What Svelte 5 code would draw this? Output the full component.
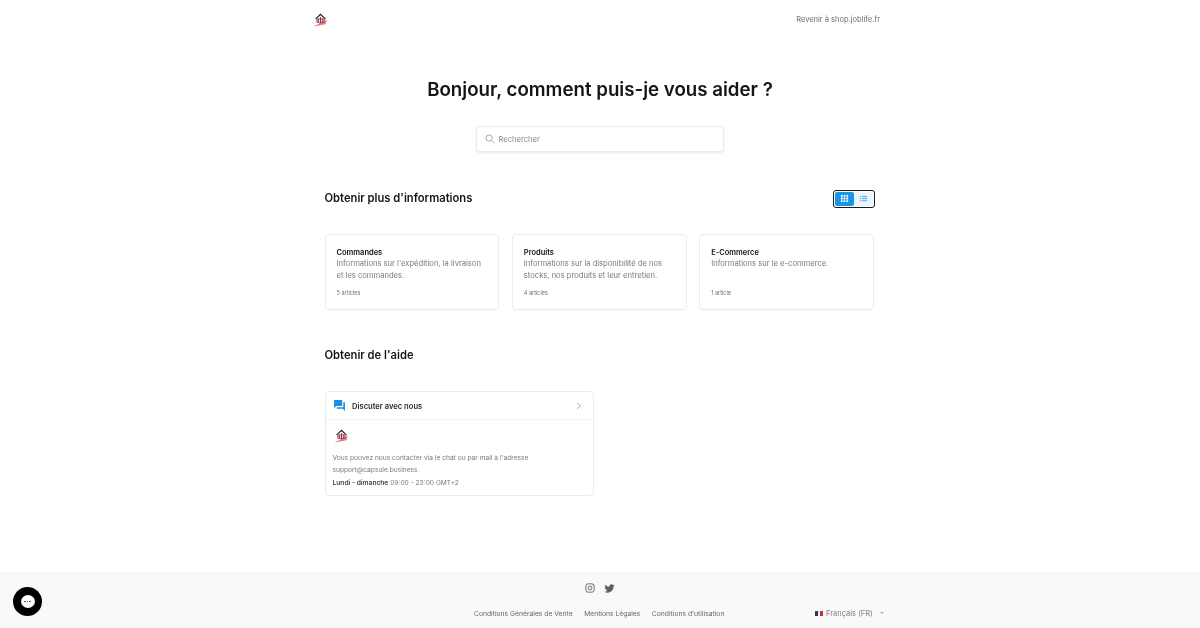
<script>
  const cards = [
    { title: 'Commandes', text: "Informations sur l'expédition, la livraison et les commandes.", count: '5 articles' },
    { title: 'Produits', text: 'Informations sur la disponibilité de nos stocks, nos produits et leur entretien.', count: '4 articles' },
    { title: 'E-Commerce', text: 'Informations sur le e-commerce.', count: '1 article' }
  ];
</script>

{#snippet logo()}
  <svg class="logo" viewBox="0 0 16 16" width="15" height="15" aria-hidden="true">
    <path d="M0.500 15.500 L14.500 8 L13.500 13 Z" fill="#ea7c8a"/>
    <path d="M2 7.500 L8 1.500 L14 7.500 L12.500 7.500 L8 3.500 L3.500 7.500 Z" fill="#222"/>
    <path d="M4 7.500 H12 V11 H4 Z" fill="#fff" stroke="#333" stroke-width="0.600"/>
    <path d="M5.500 7 V11.500 M8 5.500 V12 M10.500 7 V11.500" stroke="#b01c2e" stroke-width="1.300"/>
  </svg>
{/snippet}

<div class="page">
  <header class="top">
    {@render logo()}
    <span class="back">Revenir à shop.joblife.fr</span>
  </header>

  <main class="main">
    <h1>Bonjour, comment puis-je vous aider ?</h1>
    <div class="search">
      <svg viewBox="0 0 16 16" width="10" height="10" fill="none" stroke="#a5a5a5" stroke-width="1.500" aria-hidden="true">
        <circle cx="6.500" cy="6.500" r="5"/><path d="M10.500 10.500 L15 15"/>
      </svg>
      <span>Rechercher</span>
    </div>

    <section class="content">
      <div class="head">
        <h2>Obtenir plus d'informations</h2>
        <div class="toggle">
          <span class="opt active">
            <svg viewBox="0 0 10 10" width="9" height="9" fill="#fff" aria-hidden="true">
              <path d="M1 1h2v2H1zM4 1h2v2H4zM7 1h2v2H7zM1 4h2v2H1zM4 4h2v2H4zM7 4h2v2H7zM1 7h2v2H1zM4 7h2v2H4zM7 7h2v2H7z"/>
            </svg>
          </span>
          <span class="opt">
            <svg viewBox="0 0 10 10" width="9" height="9" fill="#6db9ec" aria-hidden="true">
              <path d="M1 2h1.500v1.400H1zM3.400 2H9v1.400H3.400zM1 4.300h1.500v1.400H1zM3.400 4.300H9v1.400H3.400zM1 6.600h1.500V8H1zM3.400 6.600H9V8H3.400z"/>
            </svg>
          </span>
        </div>
      </div>

      <div class="cards">
        {#each cards as c}
          <article class="card">
            <h3>{c.title}</h3>
            <p>{c.text}</p>
            <small>{c.count}</small>
          </article>
        {/each}
      </div>

      <h2 class="help-title">Obtenir de l'aide</h2>

      <div class="chat">
        <div class="chat-head">
          <svg viewBox="0 0 24 24" width="13" height="13" aria-hidden="true">
            <path d="M2 2h15v11H6l-4 4z" fill="#1a8fe0"/>
            <path d="M19 6h3v16l-4-4H7v-3h12z" fill="#1a8fe0"/>
          </svg>
          <strong>Discuter avec nous</strong>
          <svg class="chev" viewBox="0 0 8 10" width="6" height="8" fill="none" stroke="#a5a5a5" stroke-width="1.200" aria-hidden="true">
            <path d="M1.500 1 L6 5 L1.500 9"/>
          </svg>
        </div>
        <div class="chat-body">
          <div class="chat-logo">{@render logo()}</div>
          <p>Vous pouvez nous contacter via le chat ou par mail à l'adresse support@capsule.business.</p>
          <p class="hours"><b>Lundi - dimanche</b> 09:00 - 23:00 GMT+2</p>
        </div>
      </div>
    </section>
  </main>

  <footer class="foot">
    <div class="social">
      <svg viewBox="0 0 24 24" width="10" height="10" fill="none" stroke="#666" stroke-width="2.200" aria-hidden="true">
        <rect x="2" y="2" width="20" height="20" rx="5.500"/><circle cx="12" cy="12" r="4.600"/><circle cx="17.600" cy="6.400" r="0.900" fill="#666" stroke="none"/>
      </svg>
      <svg viewBox="0 0 24 24" width="11" height="11" fill="#5f5f5f" aria-hidden="true">
        <path d="M23 4.900c-.8.400-1.700.600-2.600.700.900-.600 1.600-1.400 2-2.500-.900.500-1.900.900-2.900 1.100A4.600 4.600 0 0 0 11.700 8.400 13 13 0 0 1 2.300 3.600a4.600 4.600 0 0 0 1.400 6.100c-.700 0-1.400-.200-2.100-.600 0 2.200 1.600 4.100 3.700 4.600-.700.200-1.400.200-2.100.100.600 1.900 2.300 3.200 4.300 3.200A9.200 9.200 0 0 1 .7 18.900 13 13 0 0 0 20.800 7.300c.900-.600 1.600-1.400 2.200-2.400z"/>
      </svg>
    </div>
    <div class="foot-row">
      <nav class="links">
        <span>Conditions Générales de Vente</span>
        <span>Mentions Légales</span>
        <span>Conditions d'utilisation</span>
      </nav>
      <div class="lang">
        <span class="flag"><i class="b"></i><i class="w"></i><i class="r"></i></span>
        <span>Français (FR)</span>
        <span class="caret"></span>
      </div>
    </div>
  </footer>

  <div class="bubble">
    <span class="bubble-in"><i></i><i></i><i></i></span>
  </div>
</div>

<style>
  :global(body) {
    margin: 0;
    background: #fff;
    font-family: Inter, "Liberation Sans", sans-serif;
  }
  .page {
    width: 1200px;
    height: 628px;
    display: flex;
    flex-direction: column;
    overflow: hidden;
    position: relative;
    color: #111;
    will-change: opacity;
  }
  .top {
    width: 567px;
    margin-left: 313px;
    height: 38px;
    display: flex;
    align-items: center;
    justify-content: space-between;
    flex: none;
  }
  .back {
    font-size: 7.500px;
    color: #6e6e6e;
  }
  .logo { display: block; }
  .main {
    flex: 1;
    display: flex;
    flex-direction: column;
    align-items: center;
  }
  h1 {
    margin: 38px 0 0;
    font-size: 18.700px;
    line-height: 28px;
    font-weight: 600;
    color: #151515;
  }
  .search {
    margin: 23px 1px 0 0;
    width: 246px;
    height: 24px;
    border-radius: 2px;
    background: #fff;
    box-shadow: 0 0 0 1px #ebebeb, 0 1px 3px rgba(0, 0, 0, 0.18);
    display: flex;
    align-items: center;
    gap: 4px;
    font-size: 7.600px;
    color: #8a8a8a;
  }
  .search svg { margin-left: 8px; }
  .content {
    width: 550px;
    margin: 37px 1px 0 0;
  }
  .head {
    display: flex;
    justify-content: space-between;
    align-items: center;
    height: 20px;
  }
  h2 {
    margin: 0;
    font-size: 11.200px;
    font-weight: 600;
    line-height: 16px;
    color: #151515;
  }
  .toggle {
    width: 38px;
    height: 14px;
    border: 1px solid #1b1b1b;
    border-radius: 3px;
    display: flex;
    padding: 1px;
    margin: 1px 0 0 0;
    box-sizing: content-box;
  }
  .opt {
    flex: 1;
    display: flex;
    align-items: center;
    justify-content: center;
    border-radius: 2px;
    background: #eaf5fd;
  }
  .opt.active { background: #1a96e2; }
  .cards {
    display: grid;
    grid-template-columns: repeat(3, 1fr);
    gap: 12.500px;
    margin-top: 26px;
    margin-right: 0.500px;
  }
  .card {
    height: 76px;
    box-sizing: border-box;
    border: 1px solid #ebebeb;
    border-radius: 4px;
    padding: 12px 11px 0;
    box-shadow: 0 1px 1px rgba(0, 0, 0, 0.02);
  }
  h3 {
    margin: 0;
    font-size: 7.500px;
    line-height: 11px;
    font-weight: 600;
    color: #111;
  }
  .card p {
    margin: 0;
    font-size: 7.600px;
    line-height: 12px;
    color: #7a7a7a;
    height: 28px;
  }
  .card small {
    display: block;
    margin-top: 2px;
    font-size: 5.500px;
    line-height: 10px;
    color: #707070;
  }
  .help-title { margin-top: 37px; }
  .chat {
    margin-top: 28px;
    width: 269px;
    height: 105px;
    box-sizing: border-box;
    border: 1px solid #ebebeb;
    border-radius: 4px;
    box-shadow: 0 1px 1px rgba(0, 0, 0, 0.02);
  }
  .chat-head {
    height: 27px;
    box-sizing: content-box;
    border-bottom: 1px solid #f4f4f4;
    display: flex;
    align-items: center;
    padding: 0 7px;
    gap: 6.500px;
    font-size: 7.600px;
  }
  .chat-head strong {
    flex: 1;
    font-weight: 600;
    color: #2a2a2a;
    padding-top: 1px;
  }
  .chev { margin-right: 4px; }
  .chat-body { padding: 8px 7px 0; }
  .chat-logo { margin-left: 1px; }
  .chat-body p {
    margin: 0;
    font-size: 6.650px;
    line-height: 12px;
    color: #7a7a7a;
  }
  .chat-body p:first-of-type { margin-top: 9px; }
  .chat-body .hours { margin-top: 1px; }
  .hours b { font-weight: 600; color: #444; }
  .foot {
    flex: none;
    height: 56px;
    background: #f9f9f9;
    position: relative;
  }
  .social {
    display: flex;
    justify-content: center;
    align-items: center;
    gap: 9px;
    padding-top: 10px;
    height: 12px;
  }
  .foot-row {
    display: flex;
    margin-top: 13px;
    margin-left: 474px;
    align-items: center;
    height: 12px;
  }
  .links {
    display: flex;
    gap: 11.500px;
    font-size: 6.750px;
    color: #666;
    width: 341px;
  }
  .lang {
    display: flex;
    align-items: center;
    gap: 3px;
    font-size: 7.500px;
    color: #808080;
  }
  .flag { display: flex; width: 8px; height: 5px; }
  .flag i { flex: 1; }
  .flag .b { background: #1d3a73; }
  .flag .w { background: #eee; }
  .flag .r { background: #c8303c; }
  .caret {
    margin-left: 4px;
    border: 2px solid transparent;
    border-top: 2px solid #aaa;
    margin-top: 2px;
  }
  .bubble {
    position: absolute;
    left: 13px;
    top: 587px;
    width: 29px;
    height: 29px;
    border-radius: 50%;
    background: #000;
    display: flex;
    align-items: center;
    justify-content: center;
  }
  .bubble-in {
    width: 14px;
    height: 13px;
    border-radius: 50%;
    background: #fff;
    display: flex;
    align-items: center;
    justify-content: center;
    gap: 1px;
  }
  .bubble-in i {
    width: 1.500px;
    height: 1.500px;
    border-radius: 50%;
    background: #444;
  }
</style>
